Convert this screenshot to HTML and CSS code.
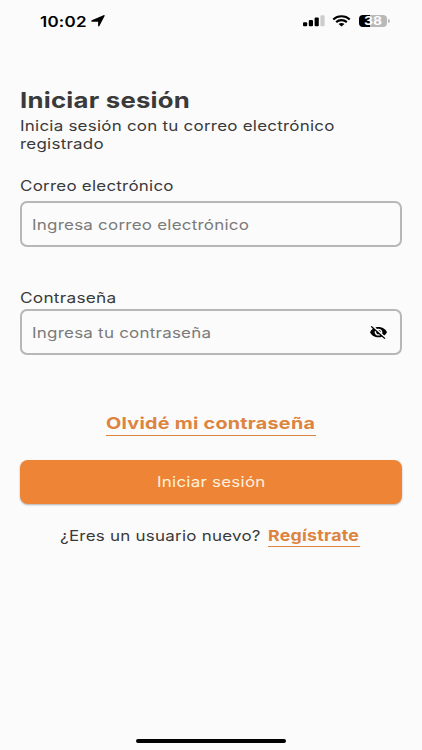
FILE: index.html
```html
<!DOCTYPE html>
<html lang="es">
<head>
<meta charset="utf-8">
<title>Iniciar sesión</title>
<link rel="stylesheet" href="styles.css">
</head>
<body>
<div class="screen">
  <header class="status">
    <div class="status-left">
      <span class="time wide">10:02</span>
      <svg class="location" width="14" height="12" viewBox="0 0 14 12"><path d="M13.6.9 8.4 11.1c-.4.7-1.3.6-1.3-.3V6.7H1.2C.1 6.7 0 5.7.8 5.3L12.5.2c.9-.3 1.4.1 1.1.7Z"/></svg>
    </div>
    <div class="status-right">
      <svg width="22" height="12" viewBox="0 0 22 12"><rect x="0" y="7.2" width="4.2" height="4" rx="1"/><rect x="5.8" y="5" width="4.2" height="6.2" rx="1"/><rect x="11.6" y="2.5" width="4.2" height="8.7" rx="1"/><rect x="17.4" y="0.2" width="4.2" height="11" rx="1" fill="#ccc"/></svg>
      <svg width="19" height="12" viewBox="0 0 20 12"><g fill="none" stroke="#000" stroke-width="2.2"><path d="M1.3 4.3C6-.2 14-.2 18.7 4.3"/><path d="M4.4 7.2C7.5 4.4 12.5 4.4 15.6 7.2"/></g><path d="M6.9 9.1c1.8-1.5 4.4-1.5 6.2 0L10 11.8Z"/></svg>
      <div class="battery"><span class="level">38</span><i class="tip"></i></div>
    </div>
  </header>
  <main>
    <h1><span class="wide">Iniciar sesión</span></h1>
    <p class="intro"><span class="wide">Inicia sesión con tu correo electrónico<br>registrado</span></p>
    <div class="label label-mail"><span class="wide">Correo electrónico</span></div>
    <div class="field"><span class="wide">Ingresa correo electrónico</span></div>
    <div class="label label-pass"><span class="wide">Contraseña</span></div>
    <div class="field"><span class="wide">Ingresa tu contraseña</span>
      <svg class="eye" width="17" height="13" viewBox="1 3 22 19" preserveAspectRatio="none"><path d="M12 7c2.76 0 5 2.24 5 5 0 .65-.13 1.26-.36 1.83l2.92 2.92c1.51-1.26 2.7-2.89 3.43-4.75-1.73-4.39-6-7.5-11-7.5-1.4 0-2.74.25-3.98.7l2.16 2.16C10.74 7.13 11.35 7 12 7zM2 4.27l2.28 2.28.46.46C3.08 8.3 1.78 10.02 1 12c1.73 4.39 6 7.5 11 7.5 1.55 0 3.03-.3 4.38-.84l.42.42L19.73 22 21 20.73 3.27 3 2 4.27zM7.53 9.8l1.55 1.55c-.05.21-.08.43-.08.65 0 1.66 1.34 3 3 3 .22 0 .44-.03.65-.08l1.55 1.55c-.67.33-1.41.53-2.2.53-2.76 0-5-2.24-5-5 0-.79.2-1.53.53-2.2zm4.31-.78 3.15 3.15.02-.16c0-1.66-1.34-3-3-3l-.17.01z"/></svg>
    </div>
    <div class="forgot"><a class="link link-forgot"><span class="wide">Olvidé mi contraseña</span></a></div>
    <div class="submit"><span class="wide">Iniciar sesión</span></div>
    <div class="signup"><span class="question"><span class="wide">¿Eres un usuario nuevo?</span></span><a class="link link-new"><span class="wide">Regístrate</span></a></div>
  </main>
  <div class="home"></div>
</div>
</body>
</html>
```
FILE: styles.css
```css
* { box-sizing: border-box; }
body { margin: 0; background: #fbfbfb; font-family: Inter, "Liberation Sans", sans-serif; color: #3a3a3a; }
.screen { width: 422px; height: 750px; overflow: hidden; display: flex; flex-direction: column; padding: 0 20px; background: #fbfbfb; }
svg { display: block; flex: none; }
.wide { display: inline-block; white-space: nowrap; transform: scaleX(1.17); transform-origin: 0 50%; letter-spacing: 0.2px; }
.status { height: 41px; display: flex; justify-content: space-between; color: #000; flex: none; }
.status-left { display: flex; padding-left: 20px; }
.time { width: 51px; font-size: 14.5px; line-height: 43px; font-weight: 600; }
.location { margin-top: 15px; }
.status-right { display: flex; gap: 8px; padding-top: 15px; margin-right: 15px; }
.status-right svg:first-child { margin-right: -1px; }
.battery { position: relative; width: 28px; height: 12px; border-radius: 4px; background: linear-gradient(90deg, #000 38%, #b9b9b9 38%); }
.level { display: block; text-align: center; font-size: 11.5px; line-height: 12px; font-weight: 700; color: #fff; transform: scaleX(1.2); }
.tip { position: absolute; left: 29px; top: 4px; width: 2px; height: 4px; border-radius: 0 2px 2px 0; background: #b9b9b9; }
main { display: flex; flex-direction: column; flex: 1; }
h1 { margin: 45px 0 0; font-size: 22px; line-height: 28px; font-weight: 700; }
.intro { margin: 3px 0 0; font-size: 14.5px; line-height: 17.5px; }
.label { font-size: 14.5px; line-height: 18px; }
.label-mail { margin-top: 25px; }
.label-pass { margin-top: 42px; }
.field { height: 46px; margin-top: 6px; padding: 0 13px 0 10px; border: 2px solid #b8b6b6; border-radius: 7px; display: flex; align-items: center; justify-content: space-between; font-size: 14.5px; color: #7a7a7a; }
.label-pass + .field { margin-top: 2px; }
.label-pass .wide { transform: scaleX(1.19); }
.eye { fill: #000; }
.forgot { margin-top: 58px; display: flex; padding-left: 86px; }
.link { display: block; width: 210px; height: 23px; border-bottom: 1px solid #dc8440; color: #dc8440; font-size: 16.3px; line-height: 21px; font-weight: 700; }
.link-forgot .wide { transform: scaleX(1.215); }
.submit { height: 44px; margin-top: 24px; padding-left: 137px; border-radius: 8px; background: #ee8536; box-shadow: 0 1px 2px rgba(0,0,0,.3); font-size: 14.5px; line-height: 44px; color: #fff0dc; }
.signup { display: flex; margin-top: 21px; padding-left: 40px; font-size: 14.5px; line-height: 21px; }
.question { width: 208px; }
.link-new { width: 92px; height: 22px; font-size: 15.2px; }
.home { width: 150px; height: 4px; margin: 0 auto 7px; border-radius: 2px; background: #000; flex: none; }
```
